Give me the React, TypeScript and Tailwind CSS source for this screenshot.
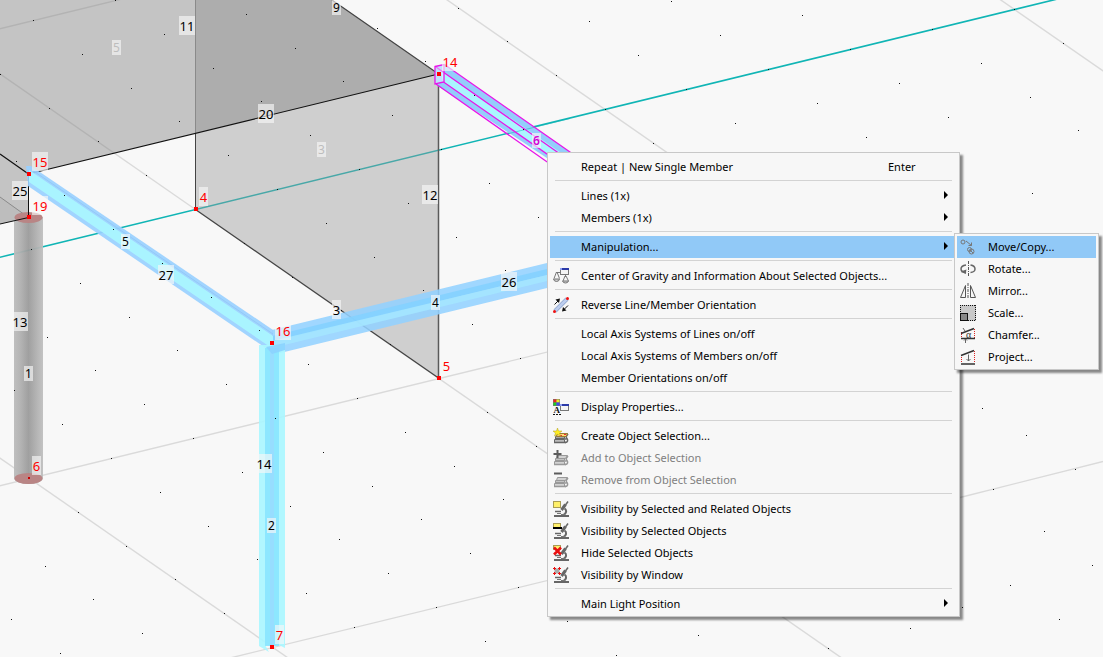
import React from "react";
import clsx from "clsx";

/* ---------- icons ---------- */

const Icon = ({ children }: { children: React.ReactNode }) => (
  <svg width="16" height="16" viewBox="0 0 16 16" fill="none" aria-hidden="true">
    {children}
  </svg>
);

const SmallWindow = ({ x, y }: { x: number; y: number }) => (
  <g>
    <rect x={x + 0.5} y={y + 0.5} width="8" height="6" fill="#f4f4f4" stroke="#777" />
    <rect x={x} y={y} width="9" height="2" fill="#2b3aa8" />
    <rect x={x} y={y} width="2" height="2" fill="#8a9cf0" />
  </g>
);

const GravityIcon = () => (
  <Icon>
    <path d="M3 4.500h4M12.500 7v2" stroke="#777" />
    <path d="M3.500 4 1 10.500M4 4l2.500 6.500M12 8l-2 5M13 8l2.500 5" stroke="#777" />
    <path d="M.5 11h6q-.5 2.500-3 2.500t-3-2.500ZM9.500 13h6q-.5 2-3 2t-3-2Z" fill="#ccc" stroke="#777" />
    <SmallWindow x={7} y={0} />
  </Icon>
);

const ReverseIcon = () => (
  <Icon>
    <path d="M2 14 14 2" stroke="#8fa3cc" strokeWidth="4" />
    <path d="M2 14 14 2" stroke="#bccdee" strokeWidth="2.500" />
    <path d="M1.500 7.500 5 4M11 12.500l4-4" stroke="#111" />
    <path d="m7 1.500-1 4.500L2.500 2.500ZM9 14.500l1-4.500L13.500 13.500Z" fill="#111" />
    <circle cx="1.500" cy="14.500" r="1.500" fill="#e11" />
    <circle cx="14.500" cy="1.500" r="1.500" fill="#e11" />
  </Icon>
);

const DisplayIcon = () => (
  <Icon>
    <rect x="0" y="0" width="7" height="7" fill="#777" />
    <rect x="0.5" y="0.5" width="3" height="3" fill="#e22" />
    <rect x="3.500" y="0.5" width="3" height="3" fill="#ee2" />
    <rect x="0.5" y="3.500" width="3" height="3" fill="#2c2" />
    <rect x="3.500" y="3.500" width="3" height="3" fill="#44e" />
    <text x="0.5" y="14" fontSize="9" fontWeight="700" fontFamily="Liberation Serif, serif" fill="#111">
      A
    </text>
    <path d="M0 15.500h8" stroke="#111" strokeDasharray="2 1" />
    <SmallWindow x={7} y={5} />
  </Icon>
);

const Stack = ({ body, line }: { body: string; line: string }) => (
  <g>
    <path d="M4.500 5.500h10l-2 3h-9ZM2.500 8.500h9v2h-9ZM1.500 11.500h10v3h-10Z" fill={body} stroke={line} />
    <path d="M12 14.500c2 0 3-1 2.500-3s-2-1.500-1-3.500l1.500-2M11.500 11h2" stroke={line} strokeWidth="1.500" />
    <path d="M2 10.500h9.500M1 14.500h12" stroke={line} strokeWidth="1.500" />
  </g>
);

const CreateIcon = () => (
  <Icon>
    <Stack body="#bbb" line="#666" />
    <path d="M4.500 5.500h10l-1.500 3H3.500Z" fill="#ffd873" stroke="#9a7b35" />
    <path d="M7 7.500h2M11 6.500h2" stroke="#e33" />
    <path d="m4.500 0 1 3h3.500L6.500 5l1 3-3-1.700L1.500 8l1-3L0 3h3.500Z" fill="#ffee22" stroke="#b0a020" strokeWidth=".5" />
  </Icon>
);

const AddIcon = () => (
  <Icon>
    <Stack body="#d2d2d2" line="#999" />
    <path d="M4.500 0v8M.5 4h8" stroke="#5c5c5c" strokeWidth="2" />
  </Icon>
);

const RemoveIcon = () => (
  <Icon>
    <Stack body="#d2d2d2" line="#999" />
    <path d="M1 1.500h8" stroke="#5c5c5c" strokeWidth="2" />
  </Icon>
);

const Microscope = ({ children }: { children: React.ReactNode }) => (
  <Icon>
    <path d="M15 .5 12.500 4" stroke="#666" strokeWidth="1.500" />
    <path d="m12.500 3.500-4 5.500" stroke="#666" strokeWidth="3" />
    <path d="M11.500 7.500c2.500 1.500 2 5-1 6.500" stroke="#666" strokeWidth="2" />
    <path d="M2 10.500h6" stroke="#666" strokeWidth="1.500" />
    <path d="M4 12.500h4M8 13.500h4" stroke="#777" />
    <path d="M1 15h15" stroke="#666" strokeWidth="2" />
    {children}
  </Icon>
);

const RelatedIcon = () => (
  <Microscope>
    <rect x="0.5" y="0.5" width="7" height="6" fill="#fff06a" stroke="#a99c55" />
  </Microscope>
);

const SelectedIcon = () => (
  <Microscope>
    <rect x="0.5" y="0.5" width="7" height="4" fill="#fff06a" stroke="#a99c55" />
    <rect x="0" y="4" width="9" height="2" fill="#000" />
  </Microscope>
);

const HideIcon = () => (
  <Microscope>
    <rect x="0.5" y="0.5" width="7" height="4" fill="#fff06a" stroke="#a99c55" />
    <path d="m1 2.500 7 7M8 2.500l-7 7" stroke="#e81010" strokeWidth="2.500" />
  </Microscope>
);

const WindowIcon = () => (
  <Microscope>
    <rect x="1.500" y="1.500" width="5" height="5" fill="#aaa" />
    <path d="M0 1.500h3M1.500 0v3M5 1.500h3M6.500 0v3M0 6.500h3M1.500 5v3M5 6.500h3M6.500 5v3" stroke="#e81010" />
  </Microscope>
);

const MoveIcon = () => (
  <Icon>
    <circle cx="3" cy="3" r="2" stroke="#777" />
    <path d="m6 2 5.500 4.500M11.500 3.500v3h-3" stroke="#777" />
    <circle cx="9.500" cy="10.500" r="2" stroke="#777" />
    <circle cx="11.500" cy="12.500" r="2.500" stroke="#777" />
    <path d="m10 11 3 3" stroke="#777" />
  </Icon>
);

const RotateIcon = () => (
  <Icon>
    <path d="M8.500 0v16" stroke="#555" strokeDasharray="3 1 1 1" />
    <path d="M6 4C2.500 4.500 1 6 1 8c0 1 .5 2 1.500 2.500M10.500 4c3 .5 4.500 2 4.500 4s-2 3.500-4.500 3.500" stroke="#666" strokeWidth="1.500" />
    <path d="m6.500 8.500-1 4.500L2 10Z" fill="#666" />
    <path d="M1.500 10.500 6 12" stroke="#666" strokeWidth="1.500" />
  </Icon>
);

const MirrorIcon = () => (
  <Icon>
    <path d="M5.500 2.500v12h-5ZM10.500 2.500v12h5Z" stroke="#555" />
    <path d="M8 0v16" stroke="#555" strokeDasharray="3 1 1 1" />
  </Icon>
);

const ScaleIcon = () => (
  <Icon>
    <rect x="0" y="0" width="16" height="16" fill="#c9c9c9" />
    <path d="M0 .5h16M.5 0v16M15.500 0v16M0 15.500h16" stroke="#111" strokeDasharray="1 1" />
    <rect x="0.5" y="8.500" width="7" height="7" fill="#888" stroke="#111" />
  </Icon>
);

const ChamferIcon = () => (
  <Icon>
    <path d="M1.500 5v6M14.500 2v9" stroke="#d22" strokeDasharray="1 1" />
    <path d="M1 6.500 14 1.500M1 11.500h14" stroke="#333" strokeWidth="1.500" />
    <path d="m3 1 2 3M5.500 16v-4M4 13.500l1.500-1.500L7 13.500" stroke="#666" />
    <text x="6" y="10.500" fontSize="10" fontFamily="Liberation Serif, serif" fill="#333">
      α
    </text>
  </Icon>
);

const ProjectIcon = () => (
  <Icon>
    <path d="M1.500 6v8M14.500 2v12" stroke="#d22" strokeDasharray="1 1" />
    <path d="M1 6.500 14 1.500M1 15h14" stroke="#333" strokeWidth="1.500" />
    <path d="M8.500 5.500V12M6.500 10l2 2 2-2" stroke="#666" />
  </Icon>
);

/* ---------- menu ---------- */

interface Entry {
  label: string;
  icon?: React.ReactNode;
  shortcut?: string;
  disabled?: boolean;
  active?: boolean;
  children?: Entry[];
  hasMore?: boolean;
}

const manipulation: Entry[] = [
  { label: "Move/Copy...", icon: <MoveIcon />, active: true },
  { label: "Rotate...", icon: <RotateIcon /> },
  { label: "Mirror...", icon: <MirrorIcon /> },
  { label: "Scale...", icon: <ScaleIcon /> },
  { label: "Chamfer...", icon: <ChamferIcon /> },
  { label: "Project...", icon: <ProjectIcon /> },
];

const groups: Entry[][] = [
  [{ label: "Repeat | New Single Member", shortcut: "Enter" }],
  [
    { label: "Lines (1x)", hasMore: true },
    { label: "Members (1x)", hasMore: true },
  ],
  [{ label: "Manipulation...", hasMore: true, active: true, children: manipulation }],
  [{ label: "Center of Gravity and Information About Selected Objects...", icon: <GravityIcon /> }],
  [{ label: "Reverse Line/Member Orientation", icon: <ReverseIcon /> }],
  [
    { label: "Local Axis Systems of Lines on/off" },
    { label: "Local Axis Systems of Members on/off" },
    { label: "Member Orientations on/off" },
  ],
  [{ label: "Display Properties...", icon: <DisplayIcon /> }],
  [
    { label: "Create Object Selection...", icon: <CreateIcon /> },
    { label: "Add to Object Selection", icon: <AddIcon />, disabled: true },
    { label: "Remove from Object Selection", icon: <RemoveIcon />, disabled: true },
  ],
  [
    { label: "Visibility by Selected and Related Objects", icon: <RelatedIcon /> },
    { label: "Visibility by Selected Objects", icon: <SelectedIcon /> },
    { label: "Hide Selected Objects", icon: <HideIcon /> },
    { label: "Visibility by Window", icon: <WindowIcon /> },
  ],
  [{ label: "Main Light Position", hasMore: true }],
];

const panel =
  "border border-[#c8c8c8] bg-[#f7f7f7] px-[2px] shadow-[3px_3px_2px_0px_rgba(0,0,0,0.45)]";

const MenuRow = ({ entry }: { entry: Entry }) => (
  <li role="none" className="relative">
    <button
      type="button"
      role="menuitem"
      disabled={entry.disabled}
      aria-haspopup={entry.hasMore ? "menu" : undefined}
      className={clsx(
        "flex h-[22px] w-full items-center pl-[3px] pr-2 text-left whitespace-nowrap",
        entry.active && "bg-[#91c9f7]",
        entry.disabled ? "text-[#808080]" : "text-black",
      )}
    >
      <span className="mr-3 flex size-4 shrink-0">{entry.icon}</span>
      <span className="flex-1">{entry.label}</span>
      {entry.shortcut && <span className="w-[61px]">{entry.shortcut}</span>}
      {entry.hasMore && (
        <svg width="6" height="8" viewBox="0 0 6 8" className="mb-[2px]" aria-hidden="true">
          <path d="M1 0l4 4-4 4Z" fill="#000" />
        </svg>
      )}
    </button>
    {entry.children && (
      <ul role="menu" className={clsx(panel, "absolute -top-[3px] left-full z-10 -ml-[3px] w-[145px] pt-[2px] pb-px")}>
        {entry.children.map((child) => (
          <MenuRow key={child.label} entry={child} />
        ))}
      </ul>
    )}
  </li>
);

const ContextMenu = () => (
  <ul
    role="menu"
    className={clsx(
      panel,
      "absolute left-[547px] top-[152px] w-[413px] pt-[3px] pb-px font-['Noto_Sans','Open_Sans',sans-serif] text-[11px] leading-[22px]",
    )}
  >
    {groups.map((group, i) => (
      <React.Fragment key={group[0].label}>
        {i > 0 && <li role="separator" className="mt-[2px] mb-1 ml-[5px] mr-[5px] h-px bg-[#d3d3d3]" />}
        {group.map((entry) => (
          <MenuRow key={entry.label} entry={entry} />
        ))}
      </React.Fragment>
    ))}
  </ul>
);

/* ---------- model view ---------- */

// Work plane: node 4 is the origin, A and B are one grid step on each axis.
const ORIGIN = [195.5, 209.5];
const A = [81.9, -20];
const B = [48.7, 33.8];

const at = (i: number, j: number) => ({
  x: ORIGIN[0] + i * A[0] + j * B[0],
  y: ORIGIN[1] + i * A[1] + j * B[1],
});

const range = (from: number, to: number, step = 1) =>
  Array.from({ length: Math.floor((to - from) / step) + 1 }, (_, k) => from + k * step);

const isFar = (p: { x: number; y: number }) => p.x > 958 && p.y > 150;

const dots = range(-20, 25)
  .flatMap((i) => range(-15, 30).map((j) => at(i, j)))
  .filter((p) => !isFar(p));

// the far side of the plane has its own, sparser points
const farDots = [
  [1032, 193],
  [982, 408],
  [1026, 435],
  [1075, 469],
  [993, 489],
  [1044, 531],
  [1092, 565],
  [1010, 585],
  [962, 607],
  [1059, 619],
];

const GridLines = () => (
  <g stroke="#dadada" strokeWidth="1.400">
    {range(-20, 25, 5).map((i) => {
      const p = at(i, -20);
      const q = at(i, 30);
      return <line key={`b${i}`} x1={p.x} y1={p.y} x2={q.x} y2={q.y} />;
    })}
    {range(-15, 30, 5).map((j) => {
      const p = at(-20, j);
      const q = at(30, j);
      return (
        <line
          key={`a${j}`}
          x1={p.x}
          y1={p.y}
          x2={q.x}
          y2={q.y}
          stroke={j === 0 ? "#10b5b5" : undefined}
          strokeWidth={j === 0 ? 1.6 : undefined}
        />
      );
    })}
    <rect x="958" y="150" width="100%" height="100%" fill="#f8f8f8" stroke="none" />
    <path d="M958 498 1600 336" fill="none" />
  </g>
);

type Tone = "line" | "node" | "surface" | "picked";

const toneFill: Record<Tone, string> = {
  line: "#000",
  node: "#f00",
  surface: "#bdbdbd",
  picked: "#d400d4",
};

interface Tag {
  text: string;
  x: number;
  y: number;
  tone?: Tone;
  small?: boolean;
}

// x, y: top left corner of the tag's plate
const tags: Tag[] = [
  { text: "11", x: 179, y: 16 },
  { text: "20", x: 258, y: 104 },
  { text: "25", x: 12, y: 181 },
  { text: "12", x: 422, y: 185 },
  { text: "27", x: 158, y: 265 },
  { text: "13", x: 12, y: 312 },
  { text: "14", x: 256, y: 454 },
  { text: "26", x: 501, y: 272 },
  { text: "3", x: 332, y: 300 },
  { text: "9", x: 332, y: 0, small: true },
  { text: "5", x: 121, y: 234, small: true },
  { text: "1", x: 24, y: 366, small: true },
  { text: "2", x: 267, y: 518, small: true },
  { text: "4", x: 431, y: 295, small: true },
  { text: "15", x: 32, y: 152, tone: "node" },
  { text: "19", x: 32, y: 196, tone: "node" },
  { text: "4", x: 199, y: 187, tone: "node" },
  { text: "14", x: 442, y: 52, tone: "node" },
  { text: "6", x: 32, y: 456, tone: "node" },
  { text: "7", x: 275, y: 625, tone: "node" },
  { text: "16", x: 275, y: 321, tone: "node" },
  { text: "5", x: 442, y: 356, tone: "node" },
  { text: "5", x: 112, y: 40, tone: "surface", small: true },
  { text: "3", x: 317, y: 142, tone: "surface", small: true },
  { text: "6", x: 532, y: 133, tone: "picked", small: true },
];

const Tags = () => (
  <g fontFamily="'Noto Sans', 'Open Sans', sans-serif">
    {tags.map(({ text, x, y, tone = "line", small }) => {
      const w = text.length === 2 ? 16 : 9;
      return (
        <g key={`${tone}-${text}-${x}`}>
          <rect x={x} y={y} width={w} height={small ? 15 : 19} fill="#f8f8f8" fillOpacity="0.65" />
          <text
            x={x + w / 2}
            y={y + (small ? 12 : 15)}
            textAnchor="middle"
            fontSize={small ? 12 : 13}
            fontWeight={tone === "picked" ? 600 : 400}
            fill={toneFill[tone]}
          >
            {text}
          </text>
        </g>
      );
    })}
  </g>
);

const nodes = [
  [28, 174],
  [28, 217],
  [195, 209],
  [438, 74],
  [438, 378],
  [271, 343],
  [271, 647],
];

const ModelView = () => (
  <svg className="absolute inset-0 h-full w-full" role="img" aria-label="Structural model">
    <defs>
      <linearGradient id="column">
        <stop offset="0" stopColor="#bcbcbc" />
        <stop offset="0.2" stopColor="#b2b2b2" />
        <stop offset="0.5" stopColor="#9b9b9b" />
        <stop offset="0.8" stopColor="#b2b2b2" />
        <stop offset="1" stopColor="#c0c0c0" />
      </linearGradient>
    </defs>

    <GridLines />

    {/* surfaces */}
    <path d="M195.500-95 438.500 74V378L195.500 209Z" fill="#959595" fillOpacity="0.42" />
    <path d="M0-120H160L438.500 74 28.500 174 0 154Z" fill="#808080" fillOpacity="0.43" />
    <path d="M0 154 28.500 174V217.500L0 224Z" fill="#808080" fillOpacity="0.43" />
    <path d="M0 197 28.500 217.500 0 224Z" fill="#808080" fillOpacity="0.1" />

    {/* lines */}
    <g fill="none">
      <path d="M195.500 0V134" stroke="#8a8a8a" />
      <path d="M195.500 133V209" stroke="#444" />
      <path d="M438.500 74V378" stroke="#5a5a5a" strokeWidth="1.500" />
      <path d="M195.500 209.500 438.500 378M438.500 74 332 0" stroke="#444" strokeWidth="1.200" />
      <path d="M28.500 174 438.500 74M0 154 28.500 174" stroke="#111" strokeWidth="1.200" />
      <path d="M0 197 28.500 217.500" stroke="#8a8a8a" />
    </g>

    {/* column */}
    <path d="M14 217V478a14.500 6 0 0 0 29 0V217Z" fill="url(#column)" fillOpacity="0.95" />
    <ellipse cx="28.500" cy="217.500" rx="14" ry="5.500" fill="#b98585" />
    <ellipse cx="28.500" cy="478.500" rx="14" ry="5.500" fill="#b98585" />
    <path d="M28.500 174V217.500L0 224" stroke="#111" fill="none" />

    {/* member 4 */}
    <g fillOpacity="0.88">
      <path d="M272 330 547 263V288L272 355Z" fill="#93d2ff" />
      <path d="M272 336 547 269V275L272 342Z" fill="#83d2ff" />
      <path d="M272 341 547 275V281L272 348Z" fill="#a4e6ff" />
    </g>

    {/* member 5 */}
    <path d="M26 166 31 166 273 330V353L28 186Z" fill="#99d0ff" fillOpacity="0.92" />
    <path d="M29 170 273 336V349L29 182Z" fill="#aaf6ff" fillOpacity="0.95" />
    <path d="M32 170 273 334" stroke="#88c2f2" strokeWidth="0.6" />

    {/* member 2 */}
    <g fillOpacity="0.92">
      <path d="M259 345H285V648L279 645H265L269 652 259 646Z" fill="#aaf6ff" />
      <path d="M265 348H279V646H265Z" fill="#8ae5ff" />
      <path d="M270 348H274V646H270Z" fill="#98dcff" />
      <path d="M266 347 285 343V350L272 354Z" fill="#8bd2ff" />
    </g>

    {/* member 6, picked */}
    <path d="M435 66.500 444 64.500 580 159V180L435 84Z" fill="#94cdfb" />
    <path d="M441 70 580 166V177L443 82Z" fill="#aaf6ff" />
    <path d="M507 134 570 118.500" stroke="#10b5b5" strokeOpacity="0.5" />
    <path
      d="M444.500 64.500 580 159M436 67 580 168M443.500 82 580 177M436 84 580 185"
      stroke="#e815e8"
      strokeWidth="1.300"
    />
    <path d="M435 66.500 444 64.500V82L435 84Z" fill="#fff" fillOpacity="0.4" stroke="#e815e8" strokeWidth="1.300" />

    <g fill="#111">
      {dots.map((p) => (
        <rect key={`${p.x},${p.y}`} x={Math.floor(p.x)} y={Math.floor(p.y)} width="1" height="1" />
      ))}
      {farDots.map(([x, y]) => (
        <rect key={`${x},${y}`} x={x} y={y} width="1" height="1" />
      ))}
    </g>

    <Tags />

    <g fill="#f00">
      {nodes.map(([x, y]) => (
        <rect key={`${x}-${y}`} x={x - 1} y={y - 2} width="4" height="4" />
      ))}
      <rect x="28" y="477" width="2" height="2" fill="#c00" />
    </g>
  </svg>
);

export default function App() {
  return (
    <main className="relative min-h-screen overflow-hidden bg-[#f8f8f8]">
      <ModelView />
      <ContextMenu />
    </main>
  );
}
